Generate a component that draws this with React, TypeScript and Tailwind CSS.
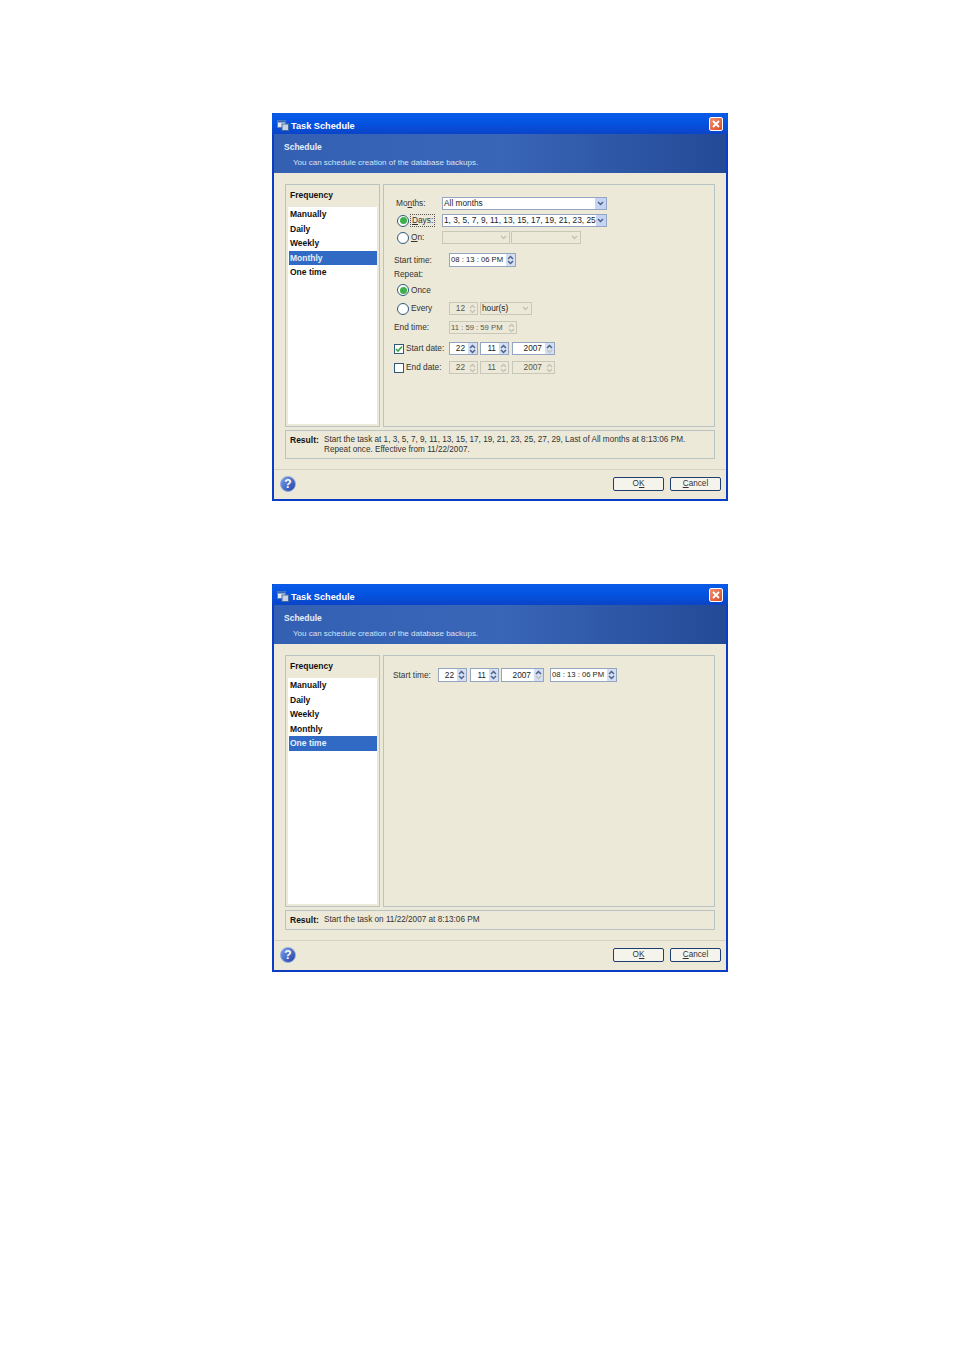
import React from "react";

const freq = ["Manually", "Daily", "Weekly", "Monthly", "One time"];

function Arrow({ up, off }: { up?: boolean; off?: boolean }) {
  return (
    <svg width="7" height="5" viewBox="0 0 7 5" className="block">
      <path
        d={up ? "M1 4 L3.5 1.5 L6 4" : "M1 1 L3.5 3.5 L6 1"}
        fill="none"
        stroke={off ? "#c4c3b6" : "#4d6185"}
        strokeWidth="1.5"
      />
    </svg>
  );
}

function Spin({
  value,
  width,
  off,
  center,
  upOnly,
}: {
  value: string;
  width: string;
  off?: boolean;
  center?: boolean;
  upOnly?: boolean;
}) {
  return (
    <div
      className={`${width} h-full flex items-center border ${
        off ? "border-[#c9c7ba] bg-[#ece9d8] text-[#55554c]" : "border-[#94a6bf] bg-white text-[#222]"
      }`}
    >
      <span className={`flex-1 whitespace-pre ${center ? "pl-[1px] text-left text-[7.7px]" : "pr-[3px] text-right"}`}>{value}</span>
      <span className={`w-[9px] h-full flex flex-col items-center justify-center ${off ? "" : "bg-[#d4dff5]"}`}>
        <Arrow up off={off} />
        <Arrow off={off || upOnly} />
      </span>
    </div>
  );
}

function Combo({ value, width, off }: { value?: string; width: string; off?: boolean }) {
  return (
    <div
      className={`${width} h-full flex items-center border pl-[1px] ${
        off ? "border-[#c9c7ba] bg-[#ece9d8]" : "border-[#94a6bf] bg-white"
      }`}
    >
      <span className="flex-1 whitespace-nowrap text-[#222]">{value}</span>
      <span className={`w-[11px] h-full flex items-center justify-center ${off ? "" : "bg-[#c6d4f4]"}`}>
        <Arrow off={off} />
      </span>
    </div>
  );
}

function Radio({ on }: { on?: boolean }) {
  return (
    <span className="ml-[3px] w-[12px] h-[12px] shrink-0 rounded-full border border-[#2f5a78] bg-white flex items-center justify-center">
      {on && <span className="w-[7px] h-[7px] rounded-full bg-[#3cb04a]" />}
    </span>
  );
}

function Check({ on }: { on?: boolean }) {
  return (
    <span className="w-[10px] h-[10px] shrink-0 border border-[#2f5a78] bg-white flex items-center justify-center">
      {on && (
        <svg width="8" height="8" viewBox="0 0 8 8">
          <path d="M1 4 L3 6 L7 1.5" fill="none" stroke="#2fa83c" strokeWidth="1.6" />
        </svg>
      )}
    </span>
  );
}

function MonthlyPanel() {
  return (
    <div className="pt-[12px] pl-[10px] text-[8.3px]">
      <div className="flex h-[13px] items-center">
        <span className="w-[48px] pl-[2px]">
          Mo<u>n</u>ths:
        </span>
        <Combo value="All months" width="w-[165px]" />
      </div>
      <div className="flex h-[13px] items-center mt-[4px]">
        <span className="w-[48px] flex items-center">
          <Radio on />
          <span className="ml-[1px] border border-dotted border-[#555] px-[1px] leading-[11px]">
            <u>D</u>ays:
          </span>
        </span>
        <Combo value="1, 3, 5, 7, 9, 11, 13, 15, 17, 19, 21, 23, 25" width="w-[165px]" />
      </div>
      <div className="flex h-[13px] items-center mt-[4px]">
        <span className="w-[48px] flex items-center">
          <Radio />
          <span className="ml-[2px]">
            <u>O</u>n:
          </span>
        </span>
        <Combo width="w-[68px]" off />
        <span className="w-[1px]" />
        <Combo width="w-[70px]" off />
      </div>
      <div className="flex h-[14px] items-center mt-[9px]">
        <span className="w-[55px]">Start time:</span>
        <Spin value="08 : 13 : 06 PM" width="w-[67px]" center />
      </div>
      <div className="h-[14px] leading-[14px]">Repeat:</div>
      <div className="flex h-[12px] items-center mt-[3px]">
        <Radio on />
        <span className="ml-[2px]">Once</span>
      </div>
      <div className="flex h-[13px] items-center mt-[6px]">
        <span className="w-[55px] flex items-center">
          <Radio />
          <span className="ml-[2px]">Every</span>
        </span>
        <Spin value="12" width="w-[29px]" off />
        <span className="w-[2px]" />
        <Combo value="hour(s)" width="w-[52px]" off />
      </div>
      <div className="flex h-[13px] items-center mt-[6px]">
        <span className="w-[55px]">End time:</span>
        <Spin value="11 : 59 : 59 PM" width="w-[68px]" off center />
      </div>
      <div className="flex h-[13px] items-center mt-[8px]">
        <span className="w-[55px] flex items-center">
          <Check on />
          <span className="ml-[2px]">Start date:</span>
        </span>
        <Spin value="22" width="w-[29px]" />
        <span className="w-[2px]" />
        <Spin value="11" width="w-[29px]" />
        <span className="w-[3px]" />
        <Spin value="2007" width="w-[43px]" upOnly />
      </div>
      <div className="flex h-[13px] items-center mt-[6px]">
        <span className="w-[55px] flex items-center">
          <Check />
          <span className="ml-[2px]">End date:</span>
        </span>
        <Spin value="22" width="w-[29px]" off />
        <span className="w-[2px]" />
        <Spin value="11" width="w-[29px]" off />
        <span className="w-[3px]" />
        <Spin value="2007" width="w-[43px]" off />
      </div>
    </div>
  );
}

function OneTimePanel() {
  return (
    <div className="mt-[12px] pl-[9px] flex items-center h-[14px] text-[8.3px]">
      <span className="w-[45px]">Start time:</span>
      <Spin value="22" width="w-[29px]" />
      <span className="w-[3px]" />
      <Spin value="11" width="w-[29px]" />
      <span className="w-[2px]" />
      <Spin value="2007" width="w-[43px]" upOnly />
      <span className="w-[6px]" />
      <Spin value="08 : 13 : 06 PM" width="w-[67px]" center />
    </div>
  );
}

function Dialog({
  selected,
  panelH,
  resultH,
  children,
  result,
}: {
  selected: string;
  panelH: string;
  resultH: string;
  children: React.ReactNode;
  result: React.ReactNode;
}) {
  return (
    <div className="w-[456px] h-[388px] flex flex-col bg-[#ece9d8] border-x-2 border-b-2 border-[#0a3cc4] text-[8.2px] text-[#333]">
      <div className="h-[21px] -mx-[2px] shrink-0 flex items-center pt-[3px] pl-[5px] pr-[5px] rounded-t-[2px] bg-gradient-to-b from-[#0a5ce8] via-[#0453e0] to-[#0a44c8]">
        <svg width="12" height="11" viewBox="0 0 12 11">
          <rect x="0.5" y="0.5" width="8" height="7" fill="#dfe8f5" stroke="#5c7fb0" />
          <rect x="0.5" y="0.5" width="8" height="2" fill="#3a68b4" />
          <rect x="5" y="4" width="6.5" height="6.5" fill="#c6d4e8" stroke="#4a6a9c" />
        </svg>
        <span className="ml-[2px] pt-[3px] flex-1 text-[9.2px] font-bold text-white">Task Schedule</span>
        <span className="w-[14px] h-[14px] -mt-[2px] rounded-[2px] border border-white bg-gradient-to-br from-[#f09070] to-[#d84a20] flex items-center justify-center">
          <svg width="10" height="10" viewBox="0 0 10 10">
            <path d="M2 2 L8 8 M8 2 L2 8" stroke="#fff" strokeWidth="1.8" />
          </svg>
        </span>
      </div>
      <div className="h-[39px] shrink-0 bg-gradient-to-r from-[#3460b4] via-[#3a66b8] to-[#234a96] text-white pl-[10px] pt-[8px]">
        <div className="text-[8.5px] font-bold leading-[11px] text-[#e8eef8]">Schedule</div>
        <div className="ml-[9px] mt-[4px] text-[8px] leading-[11px] text-[#d8e2f2]">You can schedule creation of the database backups.</div>
      </div>
      <div className="flex mt-[11px] ml-[11px] mr-[11px] gap-[3px]">
        <div className={`w-[95px] ${panelH} border border-[#b8c4c4] p-[2px] flex flex-col`}>
          <div className="h-[20px] leading-[16px] pl-[2px] text-[8.5px] font-bold text-[#111]">Frequency</div>
          <div className="flex-1 bg-white">
            {freq.map((f) => (
              <div
                key={f}
                className={`h-[14.6px] leading-[14px] ml-[1px] pl-[1px] text-[8.5px] font-bold ${
                  f === selected ? "bg-[#316ac5] text-[#e8eef8]" : "text-[#111]"
                }`}
              >
                {f}
              </div>
            ))}
          </div>
        </div>
        <div className={`w-[332px] ${panelH} border border-[#b8c4c4]`}>{children}</div>
      </div>
      <div className={`mt-[3px] mx-[11px] w-[430px] ${resultH} border border-[#b8c4c4] flex pl-[4px] pt-[4px] leading-[10px]`}>
        <span className="w-[34px] text-[8.5px] font-bold text-[#111]">Result:</span>
        <span className="whitespace-pre-line">{result}</span>
      </div>
      <div className="mt-auto h-[30px] border-t border-[#d4d2c4] flex items-center pl-[6px] pr-[5px] pb-[1px] shrink-0">
        <span className="w-[16px] h-[16px] rounded-full border border-[#8fa8e0] bg-gradient-to-br from-[#7f9fe8] to-[#2040a8] flex items-center justify-center text-[12px] font-bold text-white">
          ?
        </span>
        <span className="flex-1" />
        <span className="w-[51px] h-[14px] border border-[#1e3e70] rounded-[2px] bg-[#f4f3ec] flex items-center justify-center leading-none">
          O<u>K</u>
        </span>
        <span className="ml-[6px] w-[51px] h-[14px] border border-[#1e3e70] rounded-[2px] bg-[#f4f3ec] flex items-center justify-center leading-none">
          <u>C</u>ancel
        </span>
      </div>
    </div>
  );
}

export default function App() {
  return (
    <div className="w-[954px] h-[1351px] bg-white pt-[113px] pl-[272px] font-['Liberation_Sans',sans-serif]">
      <Dialog
        selected="Monthly"
        panelH="h-[243px]"
        resultH="h-[29px]"
        result={"Start the task at 1, 3, 5, 7, 9, 11, 13, 15, 17, 19, 21, 23, 25, 27, 29, Last of All months at 8:13:06 PM.\nRepeat once. Effective from 11/22/2007."}
      >
        <MonthlyPanel />
      </Dialog>
      <div className="h-[83px]" />
      <Dialog
        selected="One time"
        panelH="h-[252px]"
        resultH="h-[20px]"
        result="Start the task on 11/22/2007 at 8:13:06 PM"
      >
        <OneTimePanel />
      </Dialog>
    </div>
  );
}
